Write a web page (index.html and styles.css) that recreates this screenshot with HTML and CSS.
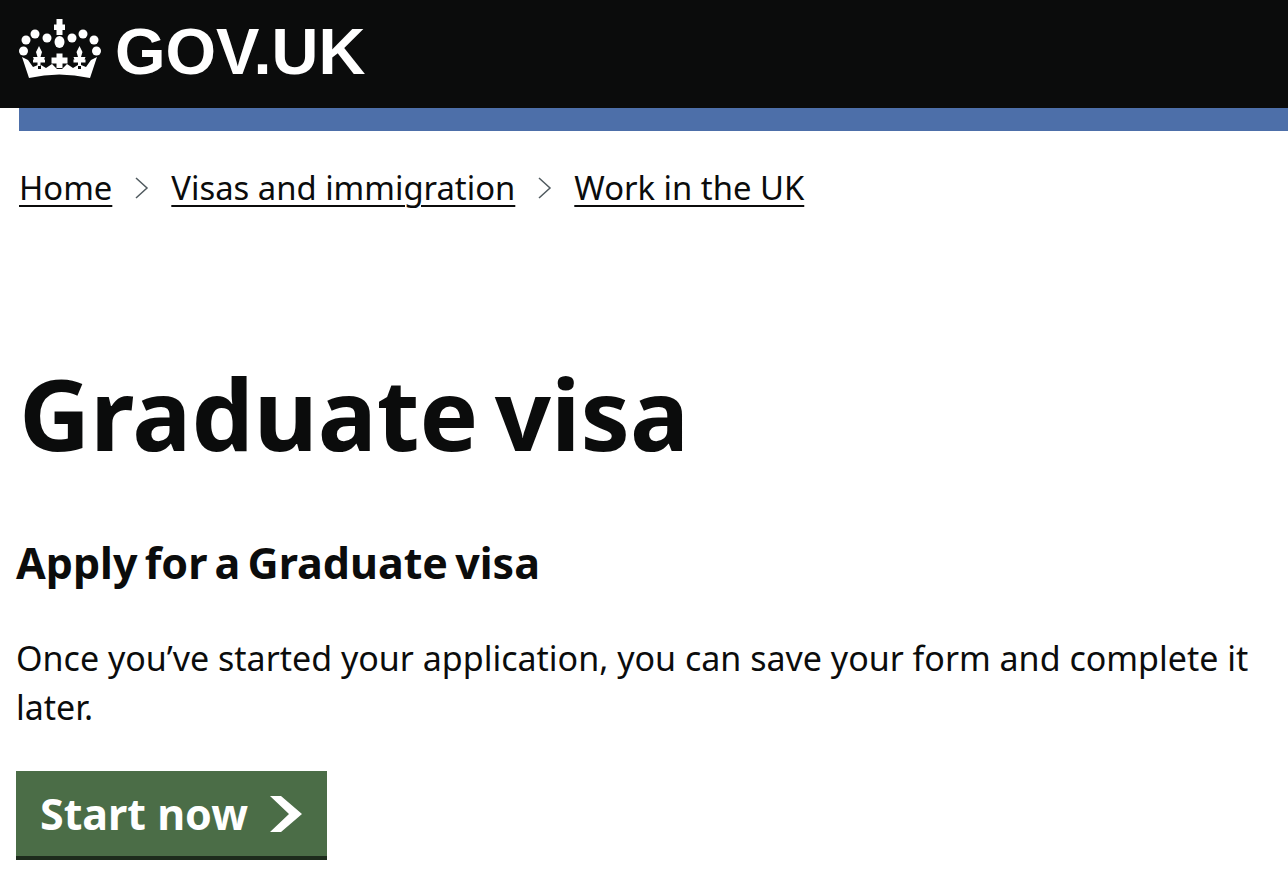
FILE: index.html
```html
<!DOCTYPE html>
<html lang="en">
<head>
  <meta charset="UTF-8">
  <title>Graduate visa - GOV.UK</title>
  <link rel="stylesheet" href="styles.css">
</head>
<body>

<header class="top-bar">
  <a href="#" class="logo">
    <svg class="crown" viewBox="0 0 82 62" width="82" height="62" aria-hidden="true">
      <g fill="#fff">
        <path d="M37.500 1h6v5.500H46v5.500h-2.500v5h-6v-5H35V6.500h2.500z"/>
        <ellipse cx="40.500" cy="24" rx="5" ry="6"/>
        <circle cx="16" cy="16" r="4.500"/>
        <circle cx="28" cy="20" r="4.500"/>
        <circle cx="53" cy="20" r="4.500"/>
        <circle cx="64" cy="16" r="4.500"/>
        <circle cx="7" cy="22" r="4.500"/>
        <circle cx="75" cy="22" r="4.500"/>
        <circle cx="4.500" cy="33" r="4.500"/>
        <circle cx="77.500" cy="33" r="4.500"/>
        <path d="M20 28l3 6-1.500 5h4.500l-1 2.500h1v3h-4.500V48h-3v-3.500H14v-3h1L14 39h4.500L17 34z"/>
        <path d="M60.500 28l3 6-1.500 5h4.500l-1 2.500h1v3H62V48h-3v-3.500h-4.500v-3h1L54.500 39H59l-1.500-5z"/>
        <path d="M37.500 35.500h6v4h5v6h-5V50h-6v-4.500h-5v-6h5z"/>
        <path d="M3 39l6 3 5 7 5-2v4h3v-4l5 3 6-4 5 5h5l5-5 6 4 5-3v4h3v-4l5 2 5-7 6-3-7 21Q40 53 10 60z"/>
      </g>
    </svg>
    <span class="logo-text">GOV.UK</span>
  </a>
</header>
<div class="blue-bar"></div>

<nav class="breadcrumbs">
  <a href="#">Home</a>
  <svg class="sep" viewBox="0 0 14 22" width="14" height="22"><path d="M1 1l11 10L1 21" fill="none" stroke="#505a5f" stroke-width="1.500"/></svg>
  <a href="#">Visas and immigration</a>
  <svg class="sep" viewBox="0 0 14 22" width="14" height="22"><path d="M1 1l11 10L1 21" fill="none" stroke="#505a5f" stroke-width="1.500"/></svg>
  <a href="#">Work in the UK</a>
</nav>

<main class="content">
  <h1>Graduate visa</h1>
  <h2>Apply for a Graduate visa</h2>
  <p>Once you’ve started your application, you can save your form and complete it later.</p>
  <a href="#" class="start-btn">
    Start now
    <svg viewBox="0 0 32 36" width="32" height="36" aria-hidden="true"><path fill="#fff" d="M0 0h11l21 18-21 18H0l19-18z"/></svg>
  </a>
</main>

</body>
</html>
```
FILE: styles.css
```css
body {
  margin: 0;
  font-family: "Noto Sans", Arial, sans-serif;
  color: #0b0c0c;
  background: #fff;
  overflow: hidden;
}
a {
  color: #0b0c0c;
}
.top-bar {
  background: #0b0c0c;
  height: 90px;
  padding: 18px 0 0 19px;
}
.logo {
  display: flex;
  align-items: flex-start;
  gap: 14px;
  text-decoration: none;
  color: #fff;
}
.logo-text {
  font-family: "Liberation Sans", Arial, sans-serif;
  font-weight: bold;
  font-size: 65px;
  line-height: 62px;
  margin-top: 3px;
}
.blue-bar {
  height: 23px;
  margin-left: 19px;
  background: #4d6fa9;
}
.breadcrumbs {
  display: flex;
  align-items: center;
  gap: 22.5px;
  padding: 35px 0 0 19px;
  font-size: 32.800px;
  line-height: 44px;
}
.breadcrumbs a {
  text-underline-offset: 5px;
  text-decoration-thickness: 1.500px;
}
.content {
  padding-left: 16px;
}
h1 {
  font-size: 98.500px;
  line-height: 110px;
  word-spacing: -9px;
  margin: 148px 0 0 3px;
}
h2 {
  font-size: 43px;
  line-height: 50px;
  word-spacing: -4px;
  margin: 70px 0 0;
}
p {
  font-size: 34px;
  line-height: 49px;
  margin: 46px 0 0;
  width: 1250px;
}
.start-btn {
  display: inline-flex;
  align-items: center;
  gap: 22px;
  width: 311px;
  height: 89px;
  margin-top: 39px;
  padding-left: 24px;
  box-sizing: border-box;
  background: #4b6d47;
  border-bottom: 4px solid #1d2b1c;
  color: #fff;
  font-size: 43px;
  font-weight: bold;
  text-decoration: none;
}
```
